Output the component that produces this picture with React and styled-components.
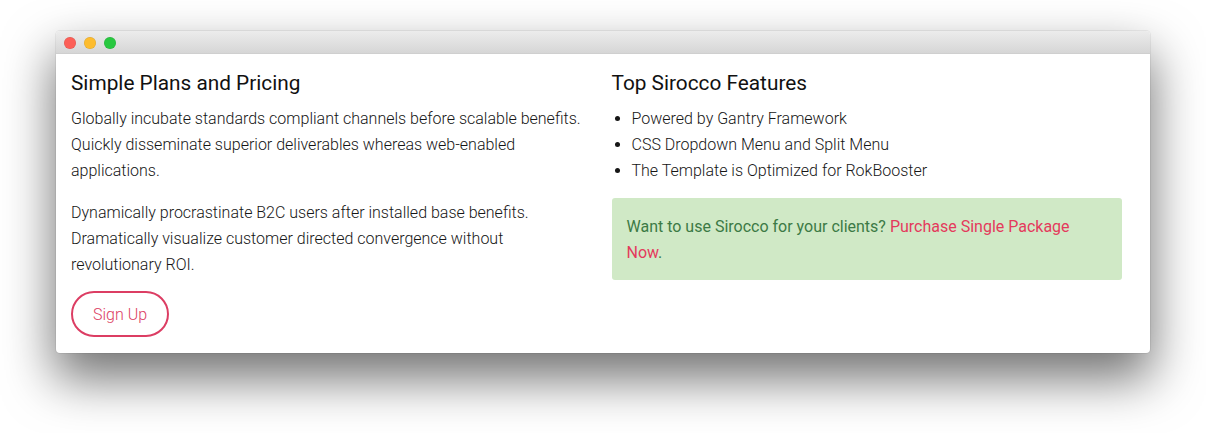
import React from "react";
import styled, { createGlobalStyle } from "styled-components";

const Global = createGlobalStyle`
  html, body { margin: 0; padding: 0; background: #ffffff; }
  body { font-family: Roboto, "Liberation Sans", sans-serif; }
`;

const Stage = styled.div`
  padding: 31px 56px 80px 56px;
`;

const Window = styled.div`
  width: 1094px;
  background: #ffffff;
  border-radius: 4px;
  overflow: hidden;
  box-shadow: 0 24px 50px 2px rgba(0, 0, 0, 0.55), 0 0 0 1px rgba(0, 0, 0, 0.06);
`;

const TitleBar = styled.div`
  height: 23px;
  display: flex;
  align-items: center;
  gap: 8px;
  padding: 1px 0 0 8px;
  background: linear-gradient(#ececec, #d6d6d6);
  border-bottom: 1px solid #cfcfcf;
  box-sizing: border-box;
`;

const Light = styled.span`
  width: 12px;
  height: 12px;
  border-radius: 50%;
  background: ${(p) => p.$c};
  box-shadow: inset 0 0 0 0.5px rgba(0, 0, 0, 0.12);
`;

const Content = styled.div`
  display: grid;
  grid-template-columns: 1fr 1fr;
  column-gap: 30px;
  padding: 17px 28px 16px 15px;
`;

const Column = styled.div`
  display: flex;
  flex-direction: column;
  align-items: flex-start;
`;

const Heading = styled.h3`
  margin: 0 0 11px 0;
  font-size: 20.8px;
  line-height: 24px;
  font-weight: 400;
  color: #111;
`;

const Para = styled.p`
  margin: 0 0 16px 0;
  font-size: 16px;
  line-height: 26px;
  font-weight: 300;
  color: #161616;
`;

const Button = styled.button`
  margin-top: -3px;
  height: 46px;
  padding: 0 20px;
  border: 2px solid #dc3d63;
  border-radius: 23px;
  background: #fff;
  color: #dc3d63;
  font-family: Roboto, "Liberation Sans", sans-serif;
  font-size: 16px;
  font-weight: 300;
`;

const List = styled.ul`
  margin: 0 0 14px 0;
  padding-left: 20px;
  font-size: 16px;
  line-height: 26px;
  font-weight: 300;
  color: #161616;
`;

const Alert = styled.div`
  align-self: stretch;
  background: #d0e9c6;
  border-radius: 3px;
  padding: 16px 15px 14px 15px;
  font-size: 16px;
  line-height: 26px;
  font-weight: 400;
  color: #3c7a45;
`;

const Link = styled.a`
  color: #e43a5c;
  text-decoration: none;
  font-weight: 400;
`;

export default function App() {
  return (
    <>
      <Global />
      <Stage>
        <Window>
          <TitleBar>
            <Light $c="#fc5f57" />
            <Light $c="#fdbc2e" />
            <Light $c="#28c840" />
          </TitleBar>
          <Content>
            <Column>
              <Heading>Simple Plans and Pricing</Heading>
              <Para>
                Globally incubate standards compliant channels before scalable benefits.
                Quickly disseminate superior deliverables whereas web-enabled applications.
              </Para>
              <Para>
                Dynamically procrastinate B2C users after installed base benefits.
                Dramatically visualize customer directed convergence without revolutionary ROI.
              </Para>
              <Button>Sign Up</Button>
            </Column>
            <Column>
              <Heading>Top Sirocco Features</Heading>
              <List>
                <li>Powered by Gantry Framework</li>
                <li>CSS Dropdown Menu and Split Menu</li>
                <li>The Template is Optimized for RokBooster</li>
              </List>
              <Alert>
                Want to use Sirocco for your clients? <Link href="#">Purchase Single Package Now</Link>.
              </Alert>
            </Column>
          </Content>
        </Window>
      </Stage>
    </>
  );
}
